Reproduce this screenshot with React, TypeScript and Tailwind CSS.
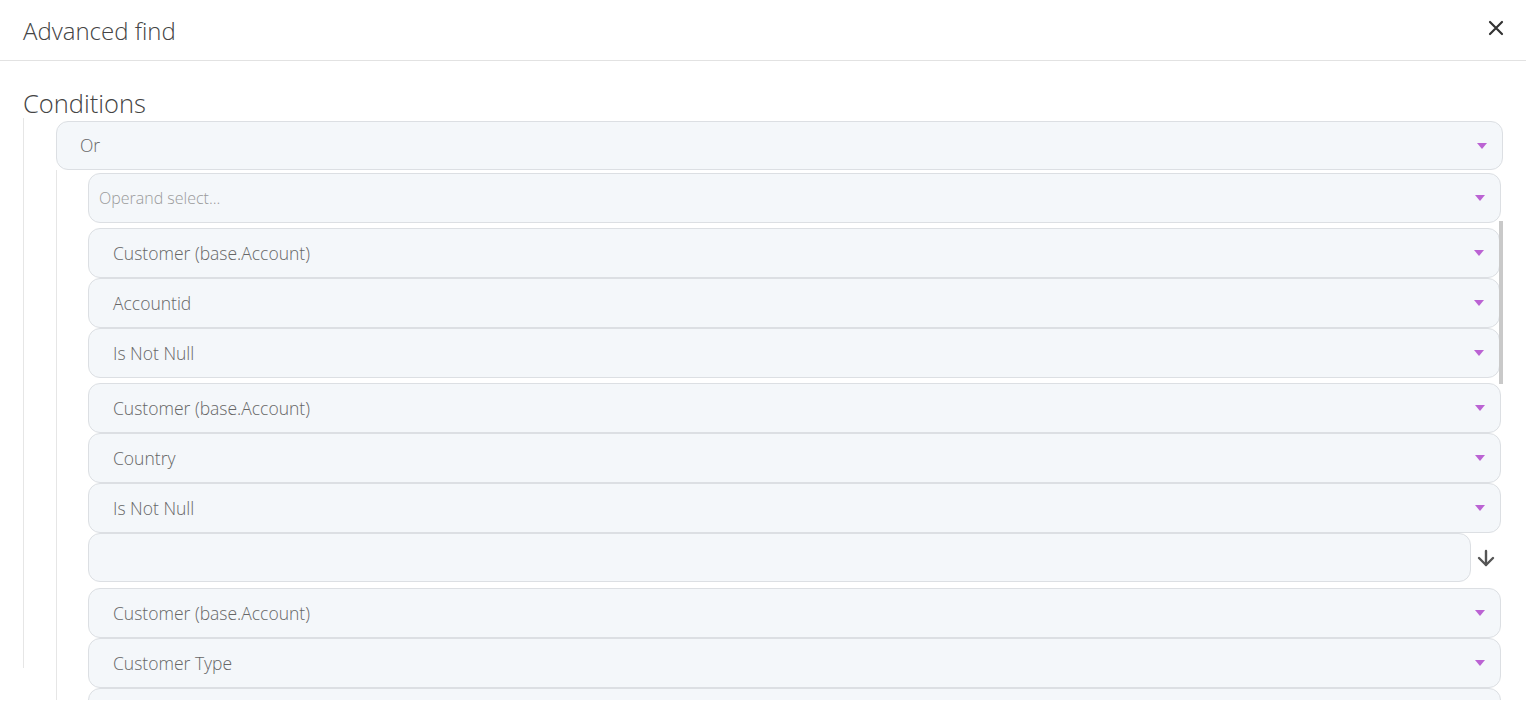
import React from 'react';
import { ArrowDown } from 'lucide-react';

const font = { fontFamily: '"Open Sans", "Noto Sans", sans-serif' };

const Caret: React.FC = () => (
  <svg width="10" height="6" viewBox="0 0 10 6" className="shrink-0">
    <path d="M0 0h10L5 6z" fill="#bb63d3" />
  </svg>
);

interface SelectProps {
  label: string;
  placeholder?: boolean;
}

const SelectRow: React.FC<SelectProps> = ({ label, placeholder }) => (
  <div className="flex h-[50px] items-center justify-between rounded-[12px] border border-[#dcdfe3] bg-[#f4f7fa] pl-[24px] pr-[15px]">
    <span
      className={
        placeholder
          ? '-ml-[14px] text-[16px] font-light text-[#9a9a9a]'
          : 'text-[17.5px] font-light text-[#666]'
      }
    >
      {label}
    </span>
    <Caret />
  </div>
);

const groups: string[][] = [
  ['Customer (base.Account)', 'Accountid', 'Is Not Null'],
  ['Customer (base.Account)', 'Country', 'Is Not Null'],
  ['Customer (base.Account)', 'Customer Type', ''],
];

export default function App() {
  return (
    <div className="h-screen bg-white" style={font}>
      <div className="h-[700px] overflow-hidden">
        <div className="flex h-[61px] items-center justify-between border-b border-[#e2e2e2] pl-[23px] pr-[22px] pb-[1px]">
          <h1 className="mt-[3px] text-[24px] font-light text-[#444]">Advanced find</h1>
          <svg width="16" height="16" viewBox="0 0 16 16" className="mt-[-4px]">
            <path d="M2 2l12 12M14 2L2 14" stroke="#333" strokeWidth="2.2" strokeLinecap="round" />
          </svg>
        </div>

        <div className="px-[23px]">
          <h2 className="pt-[27px] text-[25.5px] leading-[30px] font-light text-[#444]">Conditions</h2>

          <div className="h-[550px] border-l border-[#e6e6e6] pl-[32px]">
            <div className="pt-[3px]">
              <div className="flex h-[49px] items-center justify-between rounded-[12px] border border-[#dcdfe3] bg-[#f4f7fa] pl-[23px] pr-[15px]">
                <span className="text-[17.5px] font-light text-[#666]">Or</span>
                <Caret />
              </div>
            </div>

            <div className="relative border-l border-[#e6e6e6] pl-[31px] pr-[2px] pt-[3px] pb-[40px]">
              <SelectRow label="Operand select..." placeholder />

              <div className="absolute right-0 top-[51px] h-[163px] w-[4px] bg-[#c9c9c9]" />

              {groups.map((g, gi) => (
                <div key={gi} className={gi === 0 ? 'mt-[5px] pr-[1px]' : gi === 1 ? 'mt-[5px]' : 'mt-[6px]'}>
                  {g.map((row, ri) => (
                    <SelectRow key={ri} label={row} />
                  ))}
                  {gi === 1 && (
                    <div className="flex items-center">
                      <div className="h-[49px] flex-1 rounded-[12px] border border-[#dcdfe3] bg-[#f4f7fa]" />
                      <div className="flex w-[30px] justify-center">
                        <ArrowDown size={24} strokeWidth={2.4} color="#555" />
                      </div>
                    </div>
                  )}
                </div>
              ))}
            </div>
          </div>
        </div>
      </div>
    </div>
  );
}
